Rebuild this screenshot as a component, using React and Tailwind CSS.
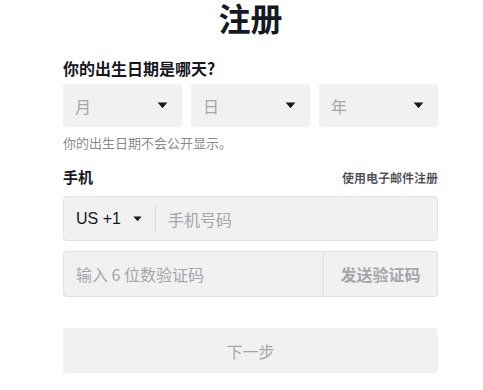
import React from "react";

const font = { fontFamily: '"Noto Sans CJK SC", "Liberation Sans", sans-serif' };

function Caret({ w = 12, h = 8 }) {
  return (
    <svg width={w} height={h} viewBox="0 0 12 8" className="shrink-0">
      <path d="M0.5 0.5 H11.5 L6 7 Z" fill="#161823" />
    </svg>
  );
}

function Select({ label }) {
  return (
    <div className="flex h-[43px] flex-1 items-center justify-between rounded-[4px] bg-[#f1f1f2] pl-[12px] pr-[14px]">
      <span className="text-[16px] text-[#a5a6aa]">{label}</span>
      <Caret w={11} h={7} />
    </div>
  );
}

export default function App() {
  return (
    <div className="min-h-[390px] w-[483px] bg-white text-[#161823]" style={font}>
      <div className="ml-[63px] w-[375px]">
        <h1 className="text-center text-[32px] font-bold leading-[34px] text-[#161823]">注册</h1>
        <div className="mt-[23px] text-[16px] font-bold leading-[22px]">你的出生日期是哪天?</div>
        <div className="mt-[5px] flex gap-[9px]">
          <Select label="月" />
          <Select label="日" />
          <Select label="年" />
        </div>
        <div className="mt-[7px] text-[13px] leading-[18px] text-[#8a8b91]">你的出生日期不会公开显示。</div>
        <div className="mt-[15px] flex items-end justify-between">
          <span className="text-[15px] font-bold leading-[20px]">手机</span>
          <span className="text-[12px] font-semibold leading-[18px] text-[#161823]/[0.75]">使用电子邮件注册</span>
        </div>
        <div className="mt-[9px] flex h-[45px] items-center rounded-[4px] border border-[#e3e3e4] bg-[#f1f1f2]">
          <div className="flex items-center gap-[12px] pl-[12px] pr-[13px]" style={{ fontFamily: '"Liberation Sans", "Noto Sans CJK SC", sans-serif' }}>
            <span className="text-[16px] text-[#161823]">US +1</span>
            <Caret w={9} h={6} />
          </div>
          <div className="h-[28px] w-px bg-[#dcdcde]" />
          <span className="pl-[12px] text-[16px] text-[#a5a6aa]">手机号码</span>
        </div>
        <div className="mt-[10px] flex h-[46px]">
          <div className="flex flex-1 items-center rounded-l-[4px] border border-[#e0e0e2] bg-[#f1f1f2] pl-[12px]">
            <span className="text-[16px] text-[#a5a6aa]">输入 6 位数验证码</span>
          </div>
          <div className="flex w-[114px] items-center justify-center rounded-r-[4px] border border-l-0 border-[#e0e0e2] bg-[#f1f1f2]">
            <span className="text-[16px] font-bold text-[#a5a6aa]">发送验证码</span>
          </div>
        </div>
        <div className="mt-[31px] flex h-[45px] items-center justify-center rounded-[4px] bg-[#f1f1f2]">
          <span className="text-[16px] text-[#a5a6aa]">下一步</span>
        </div>
      </div>
    </div>
  );
}
